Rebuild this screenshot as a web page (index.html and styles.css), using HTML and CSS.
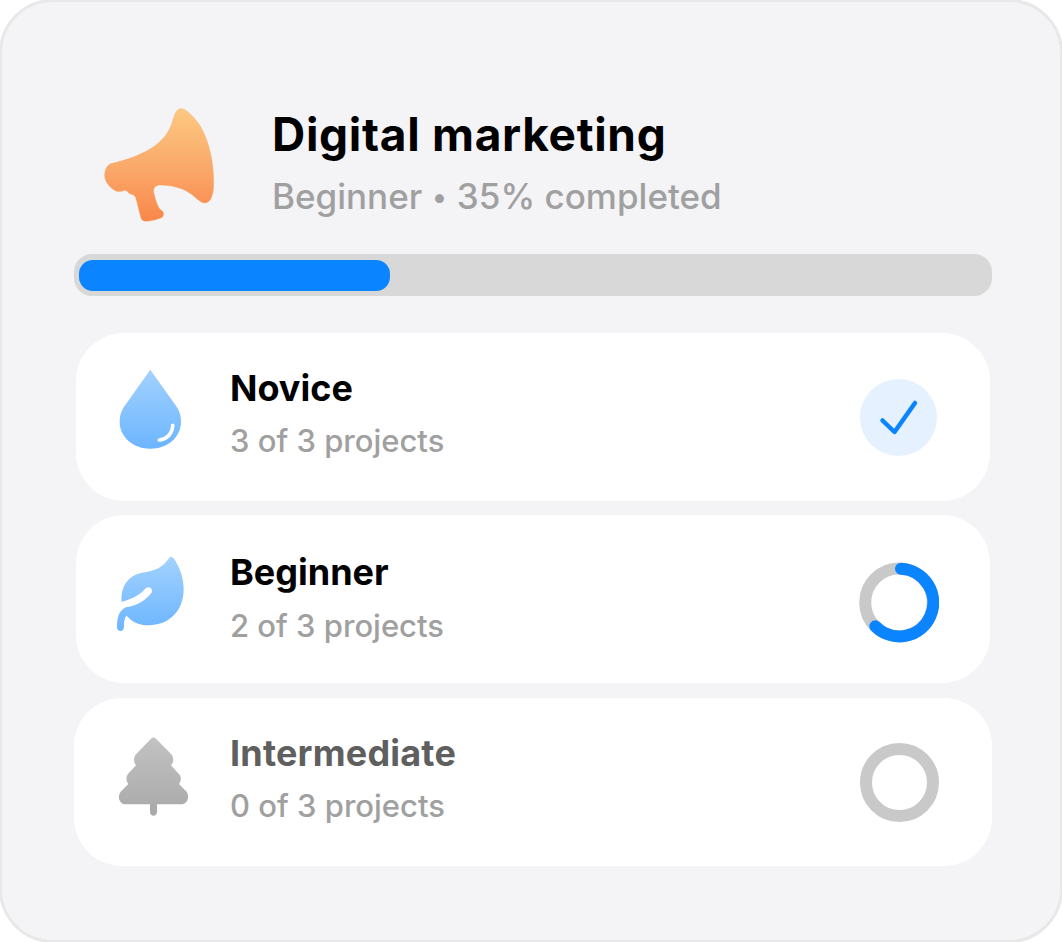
FILE: index.html
```html
<!DOCTYPE html>
<html lang="en">
<head>
  <meta charset="UTF-8" />
  <meta name="viewport" content="width=device-width, initial-scale=1.0"/>
  <title>Digital marketing</title>
  <link rel="stylesheet" href="styles.css">
</head>
<body>
  <main class="card">
    <header class="course">
      <svg class="course-icon" viewBox="0 0 420 420" aria-hidden="true">
        <defs>
          <linearGradient id="orange" x1="0" y1="0" x2="0" y2="1">
            <stop offset="0" stop-color="#fdc981"/>
            <stop offset="0.55" stop-color="#faa769"/>
            <stop offset="1" stop-color="#f9874a"/>
          </linearGradient>
        </defs>
        <path fill="url(#orange)" stroke="#f79a50" stroke-opacity=".35" stroke-width="3" d="M68 205C150 184 228 152 248 78C255 52 263 40 273 41C290 42 312 66 330 92C358 140 371 200 371 265C371 300 362 324 345 324C318 324 308 271 207 270C192 273 189 283 192 295C197 318 205 340 212 344C222 350 223 358 217 367C205 373 185 378 168 379C159 379 154 374 152 366L140 318C137 306 134 300 128 299C112 296 113 286 104 286C95 290 85 291 78 288C58 278 45 260 44 243C44 222 54 206 68 205Z"/>
      </svg>
      <div class="course-text">
        <h1>Digital marketing</h1>
        <p>Beginner <span class="dot">•</span> 35% completed</p>
      </div>
    </header>

    <div class="progress"><div class="progress-fill"></div></div>

    <section class="levels">
      <article class="level novice">
        <svg class="level-icon" viewBox="0 -66 300 504" aria-hidden="true">
          <defs>
            <linearGradient id="blue" x1="0" y1="0" x2="0" y2="1">
              <stop offset="0" stop-color="#a3d2ff"/>
              <stop offset="1" stop-color="#6cb5ff"/>
            </linearGradient>
          </defs>
          <path fill="url(#blue)" d="M151 44L232 158C240 172 243 184 243 200C243 248 200 281 151 281C102 281 59 248 59 200C59 184 62 172 70 158Z"/>
          <path class="shine" d="M218 211C218 236 200 252 178 255"/>
        </svg>
        <div class="level-text">
          <h2>Novice</h2>
          <p>3 of 3 projects</p>
        </div>
        <svg class="status" viewBox="0 0 80 168" aria-hidden="true">
          <circle cx="39.5" cy="84.5" r="38.5" fill="#e5f1ff"/>
          <path class="check" d="M23.5 87.5L35.5 99L56 70"/>
        </svg>
      </article>

      <article class="level beginner">
        <svg class="level-icon" viewBox="0 -90 300 504" aria-hidden="true">
          <path fill="url(#blue)" d="M65 171C61 125 84 92 125 83C165 78 188 67 206 41C210 35 217 35 221 40C240 68 251 100 251 133C251 200 205 241 146 241C118 241 97 232 80 212C74 218 72 228 72 245C72 262 51 262 51 246C51 215 58 196 78 187C115 182 138 164 154 144C161 132 148 122 138 129C118 152 95 162 65 171Z"/>
        </svg>
        <div class="level-text">
          <h2>Beginner</h2>
          <p>2 of 3 projects</p>
        </div>
        <svg class="status" viewBox="0 0 80 168" aria-hidden="true">
          <circle class="ring" cx="40" cy="87.4" r="33.8"/>
          <path class="ring-value" d="M42 53.8A33.8 33.8 0 1 1 16.3 111.2"/>
        </svg>
      </article>

      <article class="level intermediate">
        <svg class="level-icon" viewBox="0 -81 300 504" aria-hidden="true">
          <defs>
            <linearGradient id="gray" x1="0" y1="0" x2="0" y2="1">
              <stop offset="0" stop-color="#c2c2c2"/>
              <stop offset="1" stop-color="#a9a9a9"/>
            </linearGradient>
          </defs>
          <path fill="url(#gray)" d="M153 41Q160 34 168 41L213 87C222 97 222 111 213 121L236 146C245 154 244 168 237 177L260 200C270 215 262 238 243 238L171 238L171 261C171 276 150 276 150 261L150 238L77 238C58 238 51 215 62 200L85 177C77 168 78 152 86 145L108 121C100 111 100 97 108 88Z"/>
        </svg>
        <div class="level-text">
          <h2>Intermediate</h2>
          <p>0 of 3 projects</p>
        </div>
        <svg class="status" viewBox="0 0 80 168" aria-hidden="true">
          <circle class="ring" cx="40.5" cy="84.5" r="33.5"/>
        </svg>
      </article>
    </section>
  </main>
</body>
</html>
```
FILE: styles.css
```css
* {
  box-sizing: border-box;
}

body {
  margin: 0;
  background-color: #fff;
  font-family: Inter, "Liberation Sans", sans-serif;
  color: #000;
  overflow: hidden;
}

h1, h2, p {
  margin: 0;
  white-space: nowrap;
}

.card {
  width: 1064px;
  height: 944px;
  margin: -1px;
  padding: 93px 68px 0 72px;
  background-color: #f4f4f7;
  border: 3px solid #e8e8e8;
  border-radius: 54px;
}

/* Course header */
.course {
  display: flex;
  height: 159px;
  padding-left: 16px;
}

.course-icon {
  width: 140px;
  height: 140px;
  flex: none;
}

.course-text {
  padding: 11px 0 0 42px;
}

.course h1 {
  font-size: 46px;
  font-weight: 700;
  line-height: 56px;
  letter-spacing: 0.7px;
}

.course p {
  margin-top: 12px;
  font-size: 35px;
  font-weight: 500;
  line-height: 44px;
  color: #a0a0a0;
}

.dot {
  margin: 0 0.5px;
  font-size: 28px;
  vertical-align: 2px;
  line-height: 1;
}

/* Progress bar */
.progress {
  height: 42px;
  padding: 6px 5px 5px;
  background-color: #d8d8d8;
  border-radius: 18px;
}

.progress-fill {
  width: 311px;
  height: 31px;
  background-color: #0a84ff;
  border-radius: 14px;
}

/* Levels */
.levels {
  display: grid;
  margin-top: 37px;
}

.level {
  display: flex;
  height: 168px;
  margin: 0 2px;
  padding: 0 51px 0 24px;
  background-color: #fff;
  border-radius: 48px;
}

.beginner {
  margin-top: 14px;
}

.intermediate {
  margin: 15px 0 0;
  padding: 0 53px 0 26px;
}

.level-icon {
  width: 100px;
  height: 168px;
  flex: none;
}

.level-text {
  flex: 1;
  padding: 33px 0 0 30px;
}

.beginner .level-text {
  padding-top: 35px;
}

.intermediate .level-text {
  padding-top: 33px;
}

.level h2 {
  font-size: 36px;
  font-weight: 700;
  line-height: 44px;
}

.level p {
  margin-top: 11px;
  font-size: 31px;
  font-weight: 500;
  line-height: 40px;
  color: #a0a0a0;
}

.beginner p {
  margin-top: 12px;
}

.intermediate h2 {
  color: #5f5f5f;
  letter-spacing: 0.2px;
}

.status {
  width: 80px;
  height: 168px;
  flex: none;
}

.shine {
  fill: none;
  stroke: #fff;
  stroke-width: 11;
  stroke-linecap: round;
}

.check {
  fill: none;
  stroke: #0a84ff;
  stroke-width: 4.5;
  stroke-linecap: round;
  stroke-linejoin: round;
}

.ring {
  fill: none;
  stroke: #c9c9c9;
  stroke-width: 12;
}

.ring-value {
  fill: none;
  stroke: #0a84ff;
  stroke-width: 12;
  stroke-linecap: round;
}
```
